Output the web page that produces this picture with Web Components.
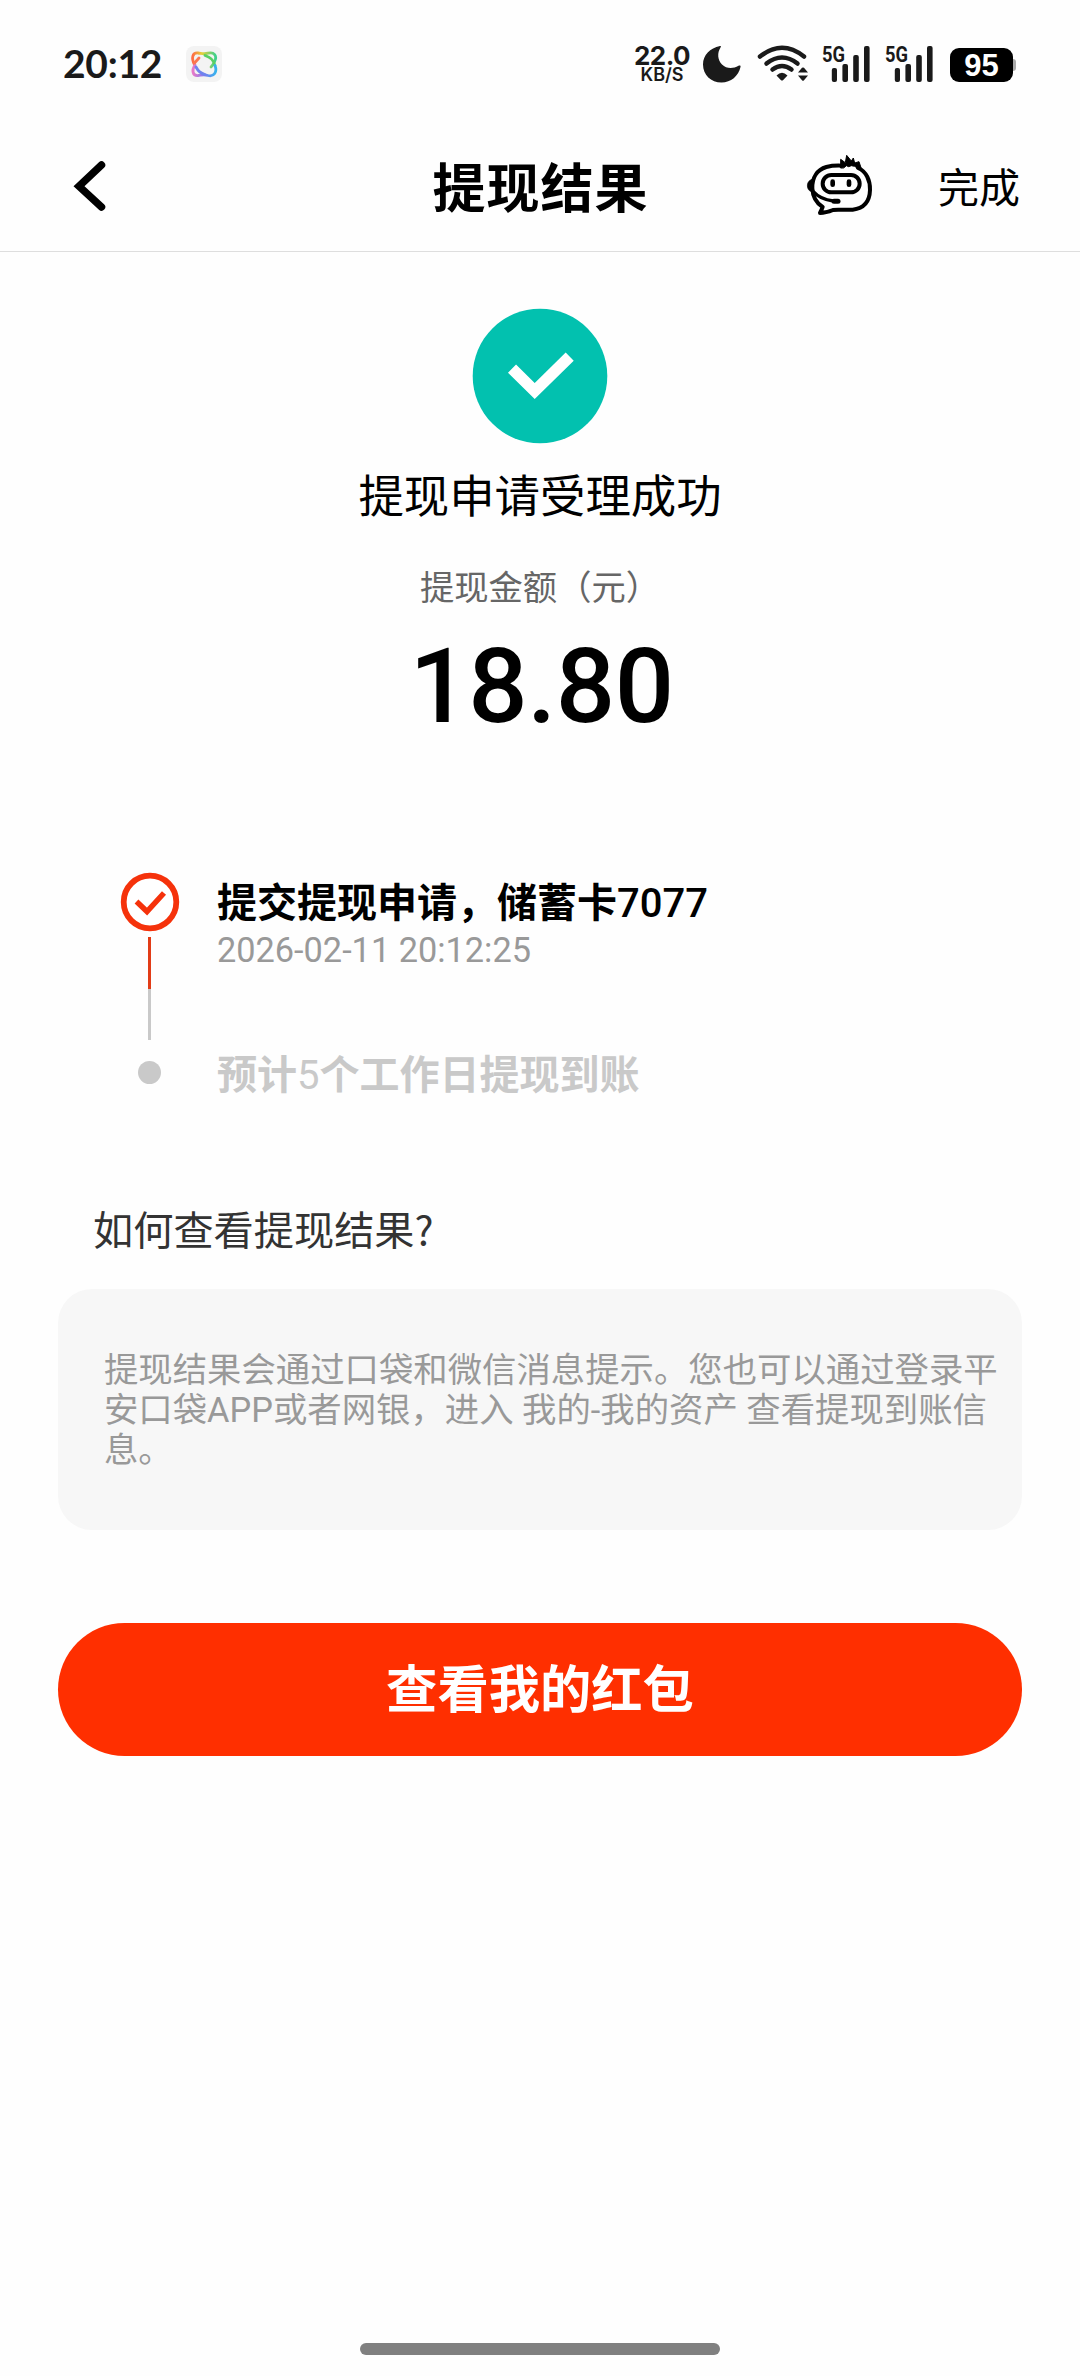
<!DOCTYPE html>
<html lang="zh-CN">
<head>
<meta charset="utf-8">
<title>提现结果</title>
<style>
html,body{margin:0;background:#fefefe}
body{font-family:Roboto,"Noto Sans CJK SC",sans-serif;color:#000}
</style>
</head>
<body>
<withdraw-page>
  <status-bar></status-bar>
  <nav-header action="完成">提现结果</nav-header>
  <result-summary amount="18.80" label="提现金额（元）">提现申请受理成功</result-summary>
  <progress-steps>
    <progress-step state="done" time="2026-02-11 20:12:25">提交提现申请，储蓄卡7077</progress-step>
    <progress-step state="pending">预计5个工作日提现到账</progress-step>
  </progress-steps>
  <info-card heading="如何查看提现结果?">提现结果会通过口袋和微信消息提示。您也可以通过登录平安口袋APP或者网银，进入 我的-我的资产 查看提现到账信息。</info-card>
  <action-button>查看我的红包</action-button>
  <home-indicator></home-indicator>
</withdraw-page>
<script>
function define(name, render) {
  customElements.define(name, class extends HTMLElement {
    constructor() {
      super();
      this.attachShadow({ mode: 'open' }).innerHTML = render(this);
    }
  });
}

define('withdraw-page', () => `
<style>
:host{display:flex;flex-direction:column;width:1080px;height:2376px;overflow:hidden;background:#fefefe}
</style><slot></slot>`);

define('signal-meter', () => `
<style>
:host{display:block;width:49px;height:38px;flex:none}
svg{display:block;margin:-10px 0 0 -2px}
text{font:700 22px Roboto,sans-serif}
</style>
<svg width="53" height="48" viewBox="-2 -10 53 48" fill="#1a1a1a">
<text x="0" y="16.6" textLength="23" lengthAdjust="spacingAndGlyphs">5G</text>
<rect x="9.8" y="23" width="5.2" height="14" rx="2"/><rect x="20.4" y="19" width="5.6" height="18" rx="2"/>
<rect x="31.2" y="10" width="5.6" height="27" rx="2"/><rect x="42" y="1" width="5.6" height="36" rx="2"/>
</svg>`);

define('status-bar', () => `
<style>
:host{display:flex;height:122px;flex:none;box-sizing:border-box;padding:45px 64px 0 63px;align-items:flex-start;color:#1a1a1a}
.time{font:700 39px/37px Lato,sans-serif;width:122px;letter-spacing:-.3px;white-space:nowrap}
.right{display:flex;margin-left:auto}
.speed{width:60px;display:flex;flex-direction:column;align-items:center;font-family:Inter,sans-serif}
.speed b{font-size:26px;line-height:22px;font-weight:700;letter-spacing:-.6px}
.speed i{font-style:normal;font-weight:600;font-size:18px;line-height:16px}
svg{display:block;flex:none}
.batt{width:63px;height:34px;margin-top:3px;border-radius:9px;background:#000;color:#fff;font:700 31px/35px "Liberation Sans",sans-serif;text-align:center}
.nub{width:3px;height:12px;margin-top:14px;border-radius:0 3px 3px 0;background:#aaa}
</style>
<span class="time">20:12</span>
<svg width="38" height="38" viewBox="0 0 38 38"><defs><linearGradient id="g" x1="0" y1="0" x2="1" y2="0"><stop offset="0" stop-color="#ff6b45"/><stop offset=".4" stop-color="#e3d23a"/><stop offset="1" stop-color="#3ed08c"/></linearGradient><linearGradient id="h" x1="0" y1="0" x2="1" y2="0"><stop offset="0" stop-color="#e879c8"/><stop offset=".5" stop-color="#7b7cf0"/><stop offset="1" stop-color="#35b3ec"/></linearGradient></defs>
<rect x="1" y="1" width="36" height="36" rx="8" fill="#f3f3f3"/>
<g fill="none" stroke-width="2.800" stroke-linecap="round">
<path d="M9.500 19.500C6 13 7.500 7.500 13 8C17 8.500 19 9.500 23 8.200C29 6.500 32.500 11 29.500 16.500C28.500 18.500 28 20 26 22" stroke="url(#g)"/>
<path d="M20 10.500C25 12 29 16 30 20.500" stroke="#58cf63"/>
<path d="M10 20C6.500 25 7.500 31 13 30.500C17 30 19 29 23 30.500C29 32 32.500 27 30 20.500" stroke="url(#h)"/>
<path d="M11 22C13 26 16 28.500 20 29.500" stroke="#6f83ee"/>
<path d="M9.500 18L14 13" stroke="#fb754f"/>
</g></svg>
<div class="right">
<div class="speed"><b>22.0</b><i>KB/S</i></div>
<svg width="58" height="38" viewBox="691 45 58 38"><path fill="#1a1a1a" d="M719 46C709 48 702 55 702 64.500C702 75 710 82.500 720.500 82.500C730 82.500 737.500 76 739.500 67C740 65.500 738.500 65.300 737.500 65.800C732 69 725.500 69 721 64.500C716.500 60 716 53 719.500 47.500C720.200 46.400 720 45.900 719 46Z"/></svg>
<svg width="72" height="38" viewBox="749 45 72 38"><g fill="none" stroke="#1a1a1a" stroke-width="4.500" stroke-linecap="round"><path d="M759 56.500Q781 39 803 56.500"/><path d="M765.500 63.500Q781 51.500 796.500 63.500"/><path d="M771.500 69.500Q781 62.500 790.500 69.500"/></g><path fill="#1a1a1a" d="M775.500 75.500Q781 70 786.500 75.500L782.200 80Q781 81.200 779.800 80ZM797 72.500L801 67.800Q802 67 803 67.800L807 72.500ZM797 75.500L801 80.200Q802 81.200 803 80.200L807 75.500Z"/></svg>
<signal-meter></signal-meter>
<signal-meter style="margin:0 16px 0 14px"></signal-meter>
<div class="batt">95</div><div class="nub"></div>
</div>`);

define('nav-header', el => `
<style>
:host{display:grid;grid-template-columns:1fr auto 1fr;align-items:center;height:130px;flex:none;box-sizing:border-box;border-bottom:1px solid #dedede;padding:0 60px 0 70px}
h1{margin:0;font:700 53px/72px "Noto Sans CJK SC",sans-serif;letter-spacing:1px;padding:0 9px 3px 0}
.right{display:flex;justify-content:flex-end;align-items:center}
.done{font:400 41px/56px "Noto Sans CJK SC",sans-serif;margin:0 0 3px 64px;white-space:nowrap}
svg{display:block}
.back{margin-bottom:2px}
.bot{margin-bottom:4px}
</style>
<svg class="back" width="40" height="56" viewBox="70 158 40 56"><path d="M101.500 165L79 186.200L101.500 207" fill="none" stroke="#000" stroke-width="7.500" stroke-linecap="round"/></svg>
<h1><slot></slot></h1>
<div class="right">
<svg class="bot" width="68" height="64" viewBox="76 36 204 192" fill="none" stroke="#000" stroke-width="12" stroke-linejoin="round" stroke-linecap="round">
<path d="M232 81C257 91 269 119 268 147C267 182 250 202 216 206C192 208 171 204 157 207C145 212 131 216 118 216Q122 208 126 198C104 184 96 165 95 142C94 109 110 86 137 78Q157 73 182 74"/>
<path fill="#000" stroke-width="3" d="M180 80L180 55L194 65L198 43L212 60L218 51L222 66L235 62L243 86L228 80L222 76L212 74L204 77L197 74L190 80Z"/>
<rect x="126" y="102" width="111" height="52" rx="26" stroke-width="12"/>
<path d="M156 122V131M205 122V131" stroke-width="14"/>
<path fill="#000" stroke-width="2" d="M99 114C82 115 76 132 83 145C87 151 92 153 97 153Q93 132 101 119Z"/>
<path d="M98 152C112 168 133 177 158 180" stroke-width="10"/><path d="M160 181H172" stroke-width="15"/>
</svg>
<span class="done">${el.getAttribute('action')}</span></div>`);

define('result-summary', el => `
<style>
:host{display:flex;flex-direction:column;align-items:center;flex:none;height:598px;box-sizing:border-box;padding-top:56px}
svg{display:block}
.title{font:400 45.400px/64px "Noto Sans CJK SC",sans-serif;margin-top:17px}
.label{font:400 34.300px/48px "Noto Sans CJK SC",sans-serif;color:#666;margin-top:36px}
.amount{font:500 104.500px/124px Roboto,sans-serif;letter-spacing:-.5px;padding-left:3px;margin-top:16px}
</style>
<svg width="136" height="136" viewBox="0 0 136 136"><circle cx="68" cy="68" r="67.300" fill="#02c1af"/><path d="M40 60.700L62.700 83L97.700 48.700" fill="none" stroke="#fff" stroke-width="11.500"/></svg>
<div class="title"><slot></slot></div>
<div class="label">${el.getAttribute('label')}</div>
<div class="amount">${el.getAttribute('amount')}</div>`);

define('progress-steps', () => `
<style>
:host{display:flex;flex-direction:column;flex:none;height:342px;box-sizing:border-box;padding:22px 0 0 120px}
</style><slot></slot>`);

define('progress-step', el => {
  const done = el.getAttribute('state') === 'done';
  return `
<style>
:host{display:flex;gap:37px;flex:none}
.rail{width:59px;margin-right:1px;display:flex;flex-direction:column;align-items:center}
.line{width:3px;height:52px;background:#e23c17}
.line.rest{height:51px;background:#c9c9c9}
.dot{width:23px;height:23px;border-radius:50%;background:#c9c9c9;margin-top:21px}
svg{display:block;margin-bottom:5px}
.text{display:flex;flex-direction:column;padding-top:${done ? '3px' : '7px'}}
.title{font-size:40px;line-height:58px;font-weight:${done ? 700 : 500};color:${done ? '#000' : '#c9c9c9'};white-space:nowrap}
.time{font:400 34.300px/40px Roboto,sans-serif;color:#999;margin-top:-3px}
.title b{font-weight:700}
.title span{font-weight:${done ? 500 : 400}}
</style>
<div class="rail">${done
    ? '<svg width="60" height="60" viewBox="120 872 60 60"><circle cx="150" cy="902" r="26.300" fill="#fff" stroke="#f5320b" stroke-width="5.800"/><path d="M136.500 901.500L147 911.500L164 893" fill="none" stroke="#f5320b" stroke-width="5.500"/></svg><div class="line"></div><div class="line rest"></div>'
    : '<div class="dot"></div>'}</div>
<div class="text"><div class="title">${el.textContent.replace(/(\d+)|([^\d]+)/g, (m, n) => n ? '<span>' + n + '</span>' : '<b>' + m + '</b>')}</div>
${done ? '<div class="time">' + el.getAttribute('time') + '</div>' : ''}</div>`;
});

define('info-card', el => `
<style>
:host{display:block;flex:none;padding:8px 58px 0}
h2{margin:0 0 0 35px;font:400 40.200px/56px "Noto Sans CJK SC",sans-serif;color:#333}
.card{margin-top:33px;height:241px;box-sizing:border-box;border-radius:34px;background:#f7f7f7;padding:61px 18px 0 46px;font-size:34.380px;line-height:40px;color:#999}
</style>
<h2>${el.getAttribute('heading')}</h2>
<div class="card"><slot></slot></div>`);

define('action-button', () => `
<style>
:host{display:block;flex:none;padding:93px 58px 0}
button{display:block;width:100%;height:133px;border:0;padding:0 0 8px;border-radius:67px;background:#ff2f00;color:#fff;font:700 51.300px/76px "Noto Sans CJK SC",sans-serif}
</style><button><slot></slot></button>`);

define('home-indicator', () => `
<style>
:host{display:block;flex:none;width:360px;height:12px;border-radius:6px;background:#808080;margin:auto auto 21px}
</style>`);
</script>
</body>
</html>
